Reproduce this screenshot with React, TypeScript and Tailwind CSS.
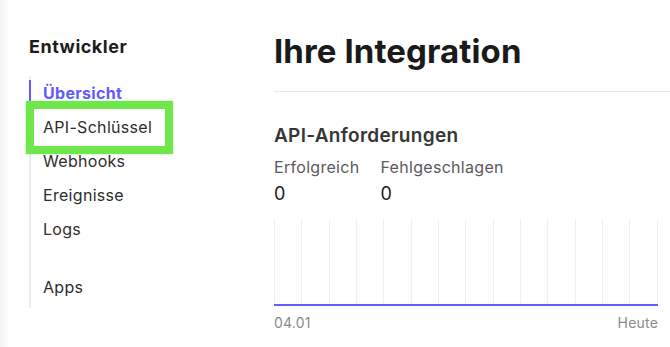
import React from "react";

const items = ["Übersicht", "API-Schlüssel", "Webhooks", "Ereignisse", "Logs"];

export default function App() {
  const lines = Array.from({ length: 15 });
  return (
    <div className="flex w-[670px] h-[347px] bg-white overflow-hidden font-['Inter',sans-serif] text-[#2a2a2a]">
      <div className="w-[10px] shrink-0 bg-gradient-to-r from-[#f3f3f3] to-white" />
      <aside className="w-[264px] shrink-0 pl-[19px] pt-[35px]">
        <h2 className="text-[18px] leading-[24px] font-bold text-[#1c1c1c] tracking-[0.5px]">Entwickler</h2>
        <div className="mt-[21px] border-l-2 border-[#ececec] pb-[4px]">
          <div className="-mt-[4px]">
            {items.map((t, i) => (
              <div key={t} className="relative h-[34px] pl-[12px] text-[16px] leading-[34px] tracking-[0.3px]">
                {i === 0 && (
                  <span className="absolute -left-[2px] top-[4px] h-[22px] w-[2px] bg-[#635bff]" />
                )}
                {i === 1 && (
                  <span className="absolute -left-[5px] -top-[9px] w-[147px] h-[53px] border-[8px] border-[#6ee64c] shadow-[0_0_2px_rgba(110,230,76,0.6)]" />
                )}
                <span className={i === 0 ? "relative font-bold text-[#635bff]" : "relative text-[#2d2d2d]"}>{t}</span>
              </div>
            ))}
            <div className="h-[34px] mt-[24px] pl-[12px] text-[16px] leading-[34px] tracking-[0.3px] text-[#2d2d2d]">Apps</div>
          </div>
        </div>
      </aside>
      <main className="flex-1 pt-[31px]">
        <h1 className="text-[33px] leading-[40px] font-bold text-[#1a1a1a] tracking-[0.1px]">Ihre Integration</h1>
        <div className="mt-[20px] h-px bg-[#e8e8e8]" />
        <div className="pr-[12px]">
          <h3 className="mt-[32px] text-[19px] leading-[24px] font-semibold text-[#363636] tracking-[0.3px]">API-Anforderungen</h3>
          <div className="mt-[7px] flex gap-[21px] tracking-[0.3px]">
            <div>
              <div className="text-[16px] leading-[24px] text-[#5a5a5a]">Erfolgreich</div>
              <div className="mt-[3px] text-[18px] leading-[24px] text-[#1a1a1a]">0</div>
            </div>
            <div>
              <div className="text-[16px] leading-[24px] text-[#5a5a5a]">Fehlgeschlagen</div>
              <div className="mt-[3px] text-[18px] leading-[24px] text-[#1a1a1a]">0</div>
            </div>
          </div>
          <div className="mt-[13px]">
            <div className="flex justify-between h-[85px]">
              {lines.map((_, i) => (
                <div key={i} className="w-px bg-[#f0f0f2]" />
              ))}
            </div>
            <div className="h-[2px] bg-[#635bff]" />
          </div>
          <div className="mt-[8px] flex justify-between text-[14px] leading-[18px] tracking-[0.2px] text-[#8a8a8e]">
            <span>04.01</span>
            <span>Heute</span>
          </div>
        </div>
      </main>
    </div>
  );
}
